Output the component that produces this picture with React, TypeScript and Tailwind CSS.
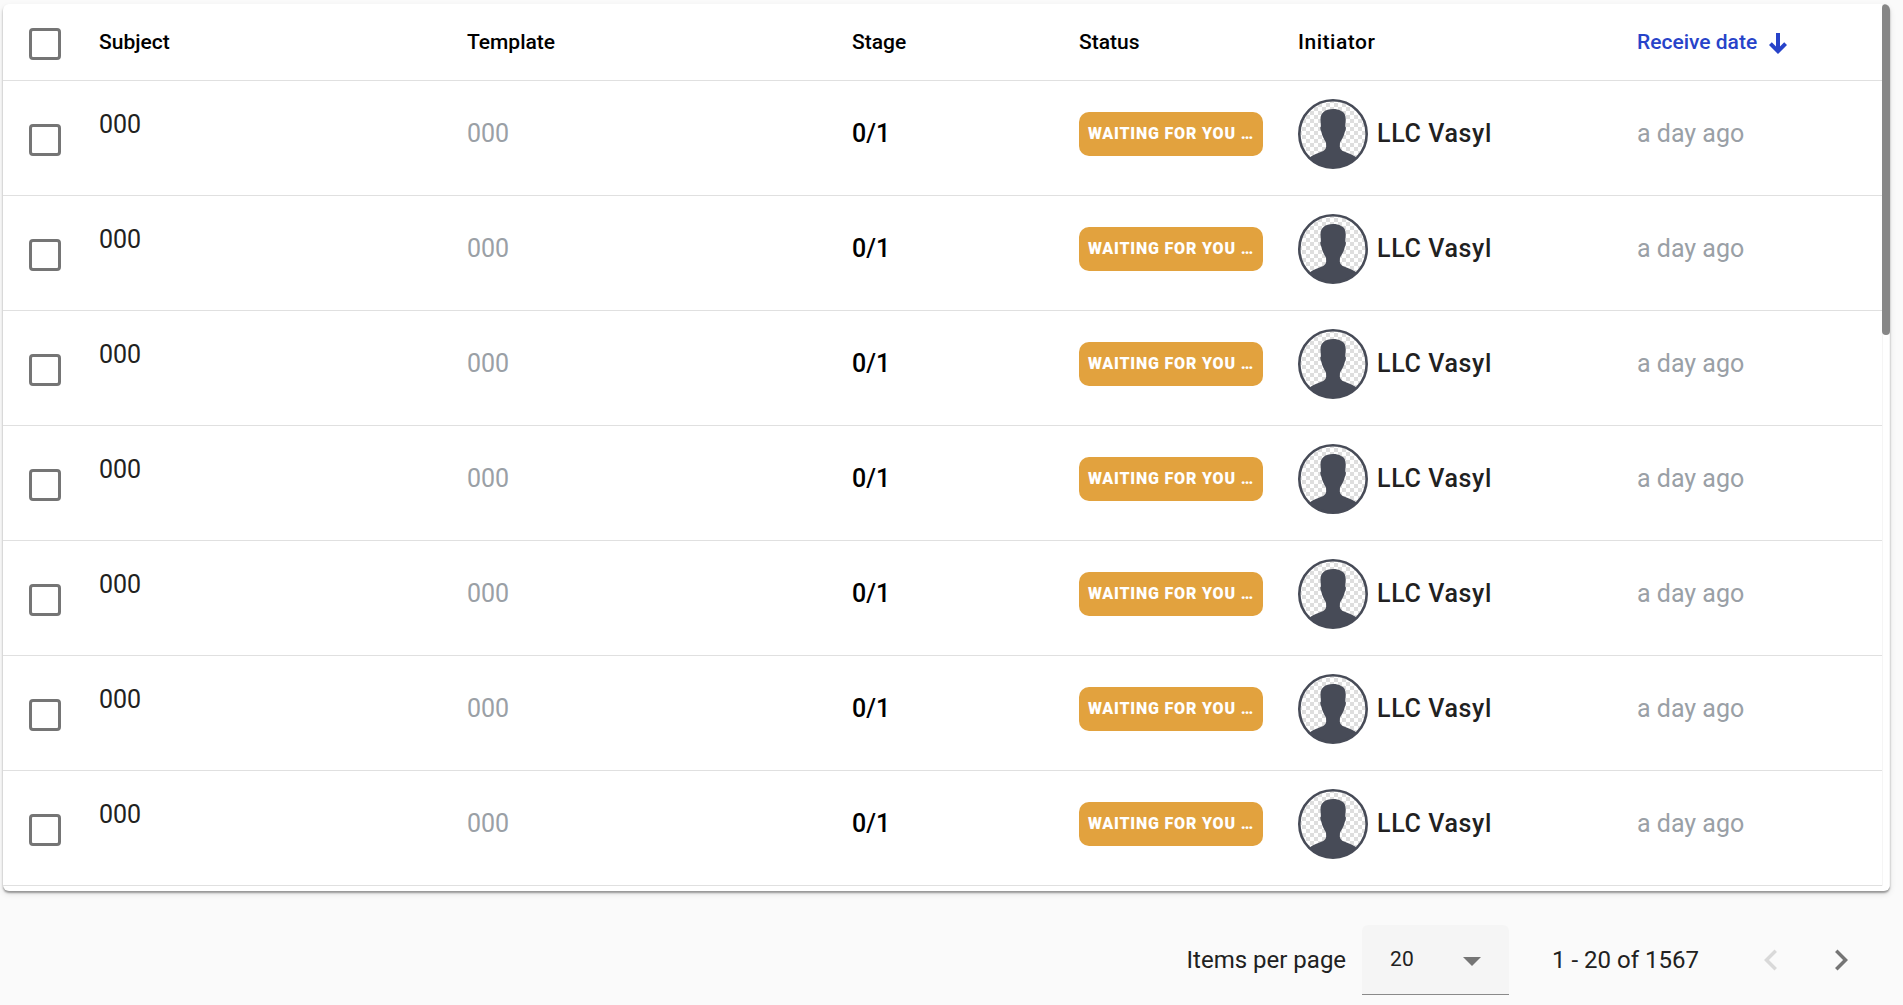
import { useState } from "react";

const rows = Array.from({ length: 7 }, (_, i) => ({
  id: i + 1,
  subject: "000",
  template: "000",
  stage: "0/1",
  status: "Waiting for you …",
  initiator: "LLC Vasyl",
  received: "a day ago",
}));

function Avatar({ id }: { id: number }) {
  const checks = `checks-${id}`;
  const clip = `clip-${id}`;
  return (
    <svg viewBox="0 0 70 70" className="size-[70px] shrink-0" aria-hidden="true">
      <defs>
        <pattern id={checks} width="8" height="8" patternUnits="userSpaceOnUse">
          <rect width="8" height="8" fill="#ffffff" />
          <rect width="4" height="4" fill="#dedede" />
          <rect x="4" y="4" width="4" height="4" fill="#dedede" />
        </pattern>
        <clipPath id={clip}>
          <circle cx="35" cy="35" r="34" />
        </clipPath>
      </defs>
      <circle cx="35" cy="35" r="34" fill={`url(#${checks})`} />
      <path
        clipPath={`url(#${clip})`}
        fill="#474b57"
        d="M35 10C38 10 41 10.600 43 12C46.500 13.200 47.800 16.500 47.700 20.500L47.300 27.500C48.300 28 47.900 30.500 46.800 33C46 37 44.300 39.800 42 43.500L41.800 47.500C42 50 43.500 51.500 46 52.500C50 54.200 54.500 55.500 58.500 58.500L62 70H8L11.500 58.500C15.500 55.500 20 54.200 24 52.500C26.500 51.500 28 50 28.200 47.500L28 43.500C25.700 39.800 24.200 37 23.400 33C22.100 30.500 21.900 28 22.900 27.500L22.500 20.500C22.300 14 27 10 35 10Z"
      />
      <circle cx="35" cy="35" r="33.700" fill="none" stroke="#474b57" strokeWidth="2.600" />
    </svg>
  );
}

function Check({ label }: { label: string }) {
  return (
    <input
      type="checkbox"
      aria-label={label}
      className="block size-8 appearance-none rounded-[4px] border-3 border-[#757575] bg-white checked:bg-[#2743c9]"
    />
  );
}

const th = "p-0 text-left align-middle text-[21px] leading-8 font-medium";

export default function App() {
  const [size, setSize] = useState("20");
  return (
    <main className="min-h-screen bg-[#fafafa] pt-1 pr-[13px] pl-[3px] font-['Roboto',sans-serif] text-[#212121]">
      <section className="flex overflow-hidden rounded-md bg-white pb-[5px] shadow-[0_2px_2px_rgba(0,0,0,0.35),0_3px_6px_rgba(0,0,0,0.1)]">
        <table className="min-w-0 flex-1 table-fixed border-collapse">
          <colgroup>
            <col className="w-[96px]" />
            <col className="w-[368px]" />
            <col className="w-[385px]" />
            <col className="w-[227px]" />
            <col className="w-[219px]" />
            <col className="w-[339px]" />
            <col className="w-[245px]" />
          </colgroup>
          <thead>
            <tr className="h-[76px] border-b border-[#e0e0e0] text-black">
              <th className="p-0 pt-1 pl-[26px]">
                <Check label="Select all" />
              </th>
              <th className={th}>Subject</th>
              <th className={th}>Template</th>
              <th className={th}>Stage</th>
              <th className={th}>Status</th>
              <th className={`${th} tracking-wide`}>Initiator</th>
              <th className={th} aria-sort="descending">
                <button type="button" className="flex items-center gap-3 text-[#2743c9]">
                  Receive date
                  <svg viewBox="0 0 18 21" className="mt-1 h-[21px] w-[18px]" fill="currentColor" aria-hidden="true">
                    <path d="M7 0h4v13.500l4.200-4.200L18 12l-9 9-9-9 2.800-2.700L7 13.500Z" />
                  </svg>
                </button>
              </th>
            </tr>
          </thead>
          <tbody>
            {rows.map((row) => (
              <tr key={row.id} className="h-[115px] border-b border-[#e0e0e0] text-[25px] leading-8">
                <td className="p-0 pt-1 pl-[26px]">
                  <Check label={`Select row ${row.id}`} />
                </td>
                <td className="p-0 pb-[26px]">{row.subject}</td>
                <td className="p-0 pb-2 text-[#9aa0a6]">{row.template}</td>
                <td className="p-0 pb-2 font-medium text-black">{row.stage}</td>
                <td className="p-0 pb-2">
                  <div className="w-[184px] rounded-[10px] bg-[#e2a23e] px-[9px] text-base leading-[44px] font-black tracking-wider whitespace-nowrap text-white uppercase">
                    {row.status}
                  </div>
                </td>
                <td className="p-0 pb-2">
                  <div className="flex items-center gap-[9px] font-medium tracking-wide">
                    <Avatar id={row.id} />
                    {row.initiator}
                  </div>
                </td>
                <td className="p-0 pb-2 text-[#9aa0a6]">{row.received}</td>
              </tr>
            ))}
          </tbody>
        </table>
        <div className="w-2 border-x border-[#f5f5f5]">
          <div className="-mx-px h-[331px] rounded-full bg-[#878787]" />
        </div>
      </section>

      <footer className="flex items-center justify-end pt-[34px] pr-[14px] text-2xl leading-8">
        <label htmlFor="page-size">Items per page</label>
        <div className="relative ml-4">
          <select
            id="page-size"
            value={size}
            onChange={(e) => setSize(e.target.value)}
            className="block h-[70px] w-[147px] appearance-none rounded-t-md border-b border-[#8a8a8a] bg-[#f5f5f5] pl-7 text-[21px]"
          >
            <option>20</option>
            <option>50</option>
            <option>100</option>
          </select>
          <svg viewBox="0 0 18 9" className="pointer-events-none absolute top-8 right-7 h-[9px] w-[18px]" fill="#757575" aria-hidden="true">
            <path d="M0 0h18l-9 9Z" />
          </svg>
        </div>
        <span className="ml-[43px]">1 - 20 of 1567</span>
        <button type="button" disabled aria-label="Previous page" className="ml-[37px] flex size-[70px] items-center justify-center text-[#d9d9d9]">
          <svg viewBox="0 0 24 24" className="size-[42px]" fill="currentColor" aria-hidden="true">
            <path d="M15.410 7.410 14 6l-6 6 6 6 1.410-1.410L10.830 12Z" />
          </svg>
        </button>
        <button type="button" aria-label="Next page" className="flex size-[70px] items-center justify-center text-[#757575]">
          <svg viewBox="0 0 24 24" className="size-[42px]" fill="currentColor" aria-hidden="true">
            <path d="M10 6 8.590 7.410 13.170 12l-4.580 4.590L10 18l6-6Z" />
          </svg>
        </button>
      </footer>
    </main>
  );
}
